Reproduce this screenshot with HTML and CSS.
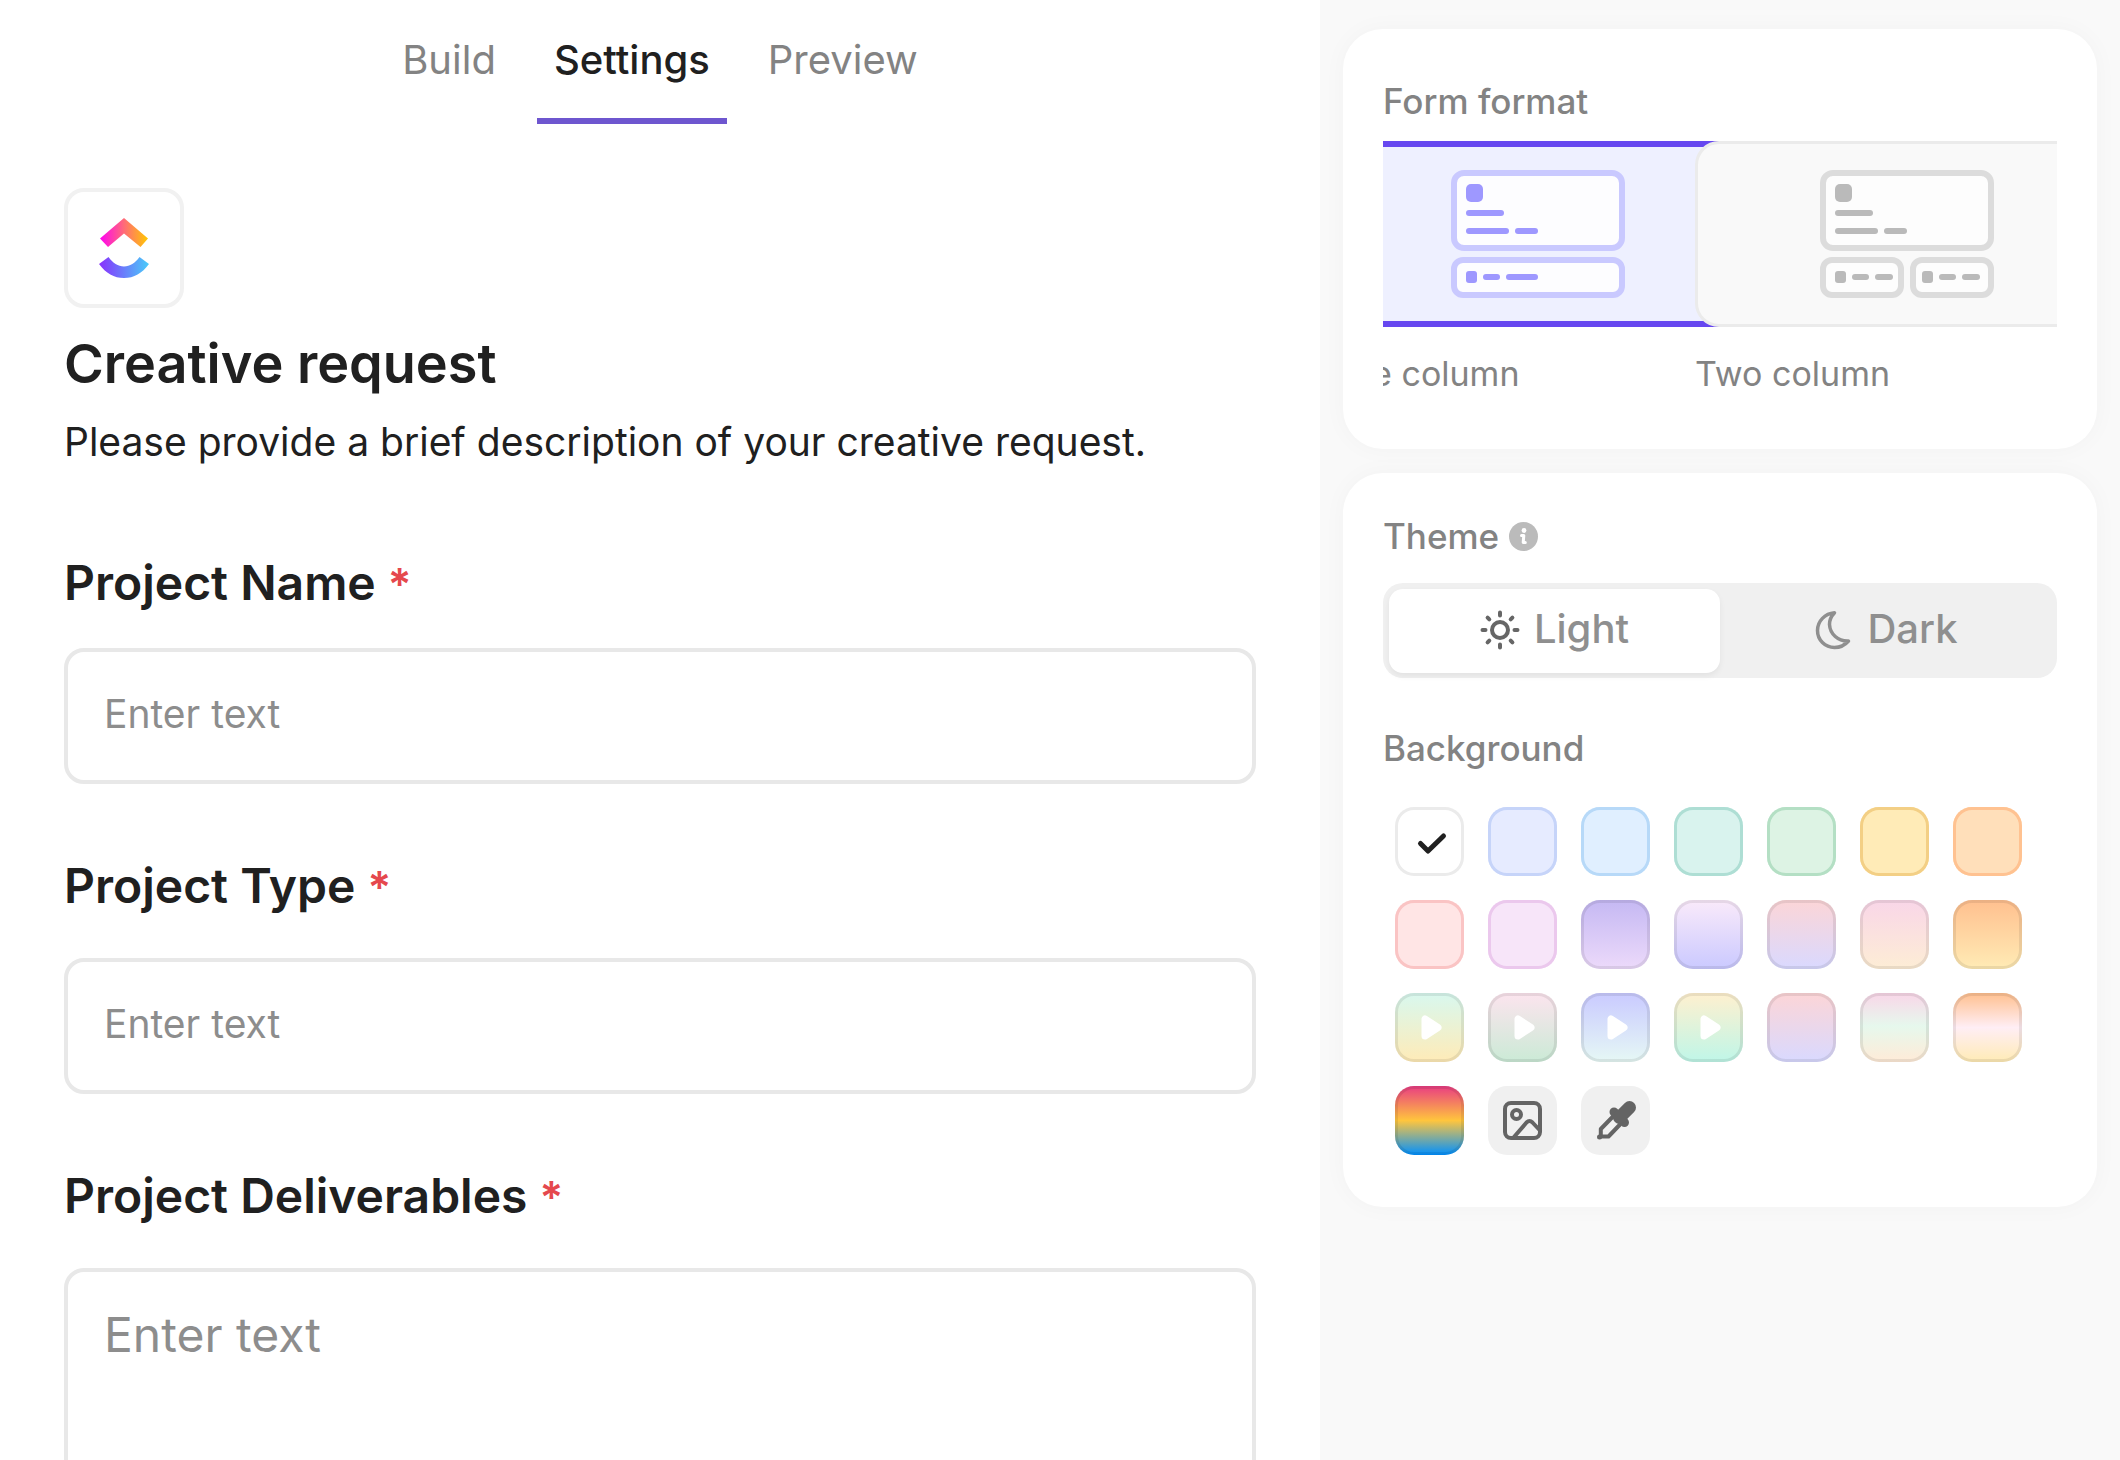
FILE: index.html
```
<!DOCTYPE html>
<html lang="en">
<head>
<meta charset="utf-8">
<meta name="viewport" content="width=device-width, initial-scale=1">
<title>Creative request – Form settings</title>
<link rel="stylesheet" href="styles.css">
</head>
<body>
<div class="app">
  <main class="editor">
    <nav class="tabs" aria-label="Form views">
      <button type="button" class="tab">Build</button>
      <button type="button" class="tab tab-active" aria-current="page">Settings</button>
      <button type="button" class="tab">Preview</button>
    </nav>

    <form class="form">
      <div class="logo">
        <svg width="112" height="112" viewBox="0 0 112 112" role="img" aria-label="ClickUp">
          <defs>
            <linearGradient id="chevron" x1="32" x2="80" y1="0" y2="0" gradientUnits="userSpaceOnUse">
              <stop offset="0" stop-color="#ff02f0"/>
              <stop offset=".5" stop-color="#ff6b78"/>
              <stop offset="1" stop-color="#ffc800"/>
            </linearGradient>
            <linearGradient id="smile" x1="31" x2="81" y1="0" y2="0" gradientUnits="userSpaceOnUse">
              <stop offset="0" stop-color="#8930fd"/>
              <stop offset="1" stop-color="#49ccf9"/>
            </linearGradient>
          </defs>
          <path fill="url(#chevron)" d="M56 26 80 46.500 72.500 55 56 41.500 40 55 32 46.500Z"/>
          <path fill="url(#smile)" d="M31 72 40.500 65C45 71 50 74.500 56 74.500S67 71 71.500 65L81 72C74 81.500 66 86 56 86S38 81.500 31 72Z"/>
        </svg>
      </div>
      <h1 class="title">Creative request</h1>
      <p class="description">Please provide a brief description of your creative request.</p>

      <div class="fields">
        <div class="field field-first">
          <label for="project-name">Project Name <span class="required">*</span></label>
          <input class="control" id="project-name" type="text" placeholder="Enter text" required>
        </div>
        <div class="field">
          <label for="project-type">Project Type <span class="required">*</span></label>
          <input class="control" id="project-type" type="text" placeholder="Enter text" required>
        </div>
        <div class="field">
          <label for="project-deliverables">Project Deliverables <span class="required">*</span></label>
          <textarea class="control control-long" id="project-deliverables" rows="5" placeholder="Enter text" required></textarea>
        </div>
      </div>
    </form>
  </main>

  <aside class="sidebar">
    <section class="card card-format">
      <h2 class="card-title">Form format</h2>
      <div class="format-viewport">
        <div class="format-strip">
          <label class="format">
            <input class="sr-only" type="radio" name="format" checked>
            <span class="format-tile">
              <svg class="thumb thumb-one" width="174" height="128" viewBox="0 0 174 128">
                <g class="thumb-frame">
                  <rect x="3" y="3" width="168" height="75" rx="10"/>
                  <rect x="3" y="90" width="168" height="35" rx="9"/>
                </g>
                <g class="thumb-ink">
                  <rect x="15" y="14" width="17" height="18" rx="5"/>
                  <rect x="15" y="40" width="38" height="6" rx="3"/>
                  <rect x="15" y="58" width="43" height="6" rx="3"/>
                  <rect x="64" y="58" width="23" height="6" rx="3"/>
                  <rect x="15" y="101" width="11" height="12" rx="3"/>
                  <rect x="32" y="104" width="17" height="6" rx="3"/>
                  <rect x="55" y="104" width="32" height="6" rx="3"/>
                </g>
              </svg>
            </span>
            <span class="format-name">One column</span>
          </label>
          <label class="format">
            <input class="sr-only" type="radio" name="format">
            <span class="format-tile">
              <svg class="thumb thumb-two" width="174" height="128" viewBox="0 0 174 128">
                <g class="thumb-frame">
                  <rect x="3" y="3" width="168" height="75" rx="10"/>
                  <rect x="3" y="90" width="78" height="35" rx="9"/>
                  <rect x="93" y="90" width="78" height="35" rx="9"/>
                </g>
                <g class="thumb-ink">
                  <rect x="15" y="14" width="17" height="18" rx="5"/>
                  <rect x="15" y="40" width="38" height="6" rx="3"/>
                  <rect x="15" y="58" width="43" height="6" rx="3"/>
                  <rect x="64" y="58" width="23" height="6" rx="3"/>
                  <rect x="15" y="101" width="11" height="12" rx="3"/>
                  <rect x="32" y="104" width="17" height="6" rx="3"/>
                  <rect x="55" y="104" width="18" height="6" rx="3"/>
                  <rect x="102" y="101" width="11" height="12" rx="3"/>
                  <rect x="119" y="104" width="17" height="6" rx="3"/>
                  <rect x="142" y="104" width="18" height="6" rx="3"/>
                </g>
              </svg>
            </span>
            <span class="format-name">Two column</span>
          </label>
        </div>
      </div>
    </section>

    <section class="card">
      <h2 class="card-title">Theme
        <svg width="29" height="29" viewBox="0 0 29 29" aria-hidden="true">
          <circle cx="14.500" cy="14.500" r="14.500" fill="#bbb"/>
          <circle cx="15" cy="8.500" r="2.400" fill="#fff"/>
          <path d="M12.500 13.500H14.800L14.200 20.500H16.300" fill="none" stroke="#fff" stroke-width="3" stroke-linecap="round" stroke-linejoin="round"/>
        </svg>
      </h2>
      <div class="theme-switch">
        <label class="theme theme-active">
          <input class="sr-only" type="radio" name="theme" checked>
          <svg width="40" height="40" viewBox="0 0 40 40" fill="none" stroke="#666" stroke-width="4" stroke-linecap="round" aria-hidden="true">
            <circle cx="20" cy="20" r="8"/>
            <path d="M20 2.500V5.500M20 34.500V37.500M2.500 20H5.500M34.500 20H37.500M7.600 7.600 9.300 9.300M30.700 30.700 32.400 32.400M7.600 32.400 9.300 30.700M30.700 9.300 32.400 7.600"/>
          </svg>
          Light
        </label>
        <label class="theme">
          <input class="sr-only" type="radio" name="theme">
          <svg width="40" height="40" viewBox="0 0 40 40" fill="none" stroke="#8f8f8f" stroke-width="3.500" stroke-linecap="round" stroke-linejoin="round" aria-hidden="true">
            <path d="M21.500 2.800C12 3.600 4.500 11 4.500 20.500C4.500 30 12 37.500 21.500 37.500C27.500 37.500 32 35 35.500 31C25 31.500 17 24 16.500 14.500C16.400 10 18.500 6 21.500 2.800Z"/>
          </svg>
          Dark
        </label>
      </div>

      <h2 class="card-title card-title-next">Background</h2>
      <div class="swatches">
        <label class="swatch bg-white"><input type="radio" name="background" aria-label="White" checked><svg viewBox="0 0 69 69" aria-hidden="true"><path class="check" d="M25.500 36.500 33 44 48.500 29"/></svg></label>
        <label class="swatch bg-indigo"><input type="radio" name="background" aria-label="Indigo"></label>
        <label class="swatch bg-sky"><input type="radio" name="background" aria-label="Sky"></label>
        <label class="swatch bg-teal"><input type="radio" name="background" aria-label="Teal"></label>
        <label class="swatch bg-green"><input type="radio" name="background" aria-label="Green"></label>
        <label class="swatch bg-yellow"><input type="radio" name="background" aria-label="Yellow"></label>
        <label class="swatch bg-orange"><input type="radio" name="background" aria-label="Orange"></label>

        <label class="swatch bg-red"><input type="radio" name="background" aria-label="Red"></label>
        <label class="swatch bg-pink"><input type="radio" name="background" aria-label="Pink"></label>
        <label class="swatch bg-violet"><input type="radio" name="background" aria-label="Violet gradient"></label>
        <label class="swatch bg-lilac"><input type="radio" name="background" aria-label="Lilac gradient"></label>
        <label class="swatch bg-dusk"><input type="radio" name="background" aria-label="Dusk gradient"></label>
        <label class="swatch bg-blush"><input type="radio" name="background" aria-label="Blush gradient"></label>
        <label class="swatch bg-amber"><input type="radio" name="background" aria-label="Amber gradient"></label>

        <label class="swatch bg-spring"><input type="radio" name="background" aria-label="Spring animation"><svg viewBox="0 0 69 69" aria-hidden="true"><path class="play" d="M30 26V43L43 34.500Z"/></svg></label>
        <label class="swatch bg-meadow"><input type="radio" name="background" aria-label="Meadow animation"><svg viewBox="0 0 69 69" aria-hidden="true"><path class="play" d="M30 26V43L43 34.500Z"/></svg></label>
        <label class="swatch bg-ice"><input type="radio" name="background" aria-label="Ice animation"><svg viewBox="0 0 69 69" aria-hidden="true"><path class="play" d="M30 26V43L43 34.500Z"/></svg></label>
        <label class="swatch bg-mint"><input type="radio" name="background" aria-label="Mint animation"><svg viewBox="0 0 69 69" aria-hidden="true"><path class="play" d="M30 26V43L43 34.500Z"/></svg></label>
        <label class="swatch bg-dusk"><input type="radio" name="background" aria-label="Evening gradient"></label>
        <label class="swatch bg-sorbet"><input type="radio" name="background" aria-label="Sorbet gradient"></label>
        <label class="swatch bg-peach"><input type="radio" name="background" aria-label="Peach gradient"></label>

        <label class="swatch bg-rainbow"><input type="radio" name="background" aria-label="Rainbow gradient"></label>
        <button type="button" class="swatch tool" aria-label="Upload image">
          <svg viewBox="0 0 69 69" fill="none" stroke="#646464" stroke-width="4" stroke-linecap="round" stroke-linejoin="round" aria-hidden="true">
            <rect x="17" y="17" width="35" height="35" rx="6"/>
            <circle cx="28.500" cy="28.500" r="4.500"/>
            <path d="M26 51 38.500 36.500Q41.500 33.500 44.500 36.500L52 44.500"/>
          </svg>
        </button>
        <button type="button" class="swatch tool" aria-label="Pick colour">
          <svg viewBox="0 0 69 69" fill="none" stroke="#646464" stroke-linecap="round" stroke-linejoin="round" aria-hidden="true">
            <path stroke-width="4" d="M32 30.500 19.800 43V50.500H27.500L39 38.500"/>
            <path stroke-width="5" d="M18.500 51H18.600"/>
            <path stroke-width="9" d="M33 26 43.500 36.500"/>
            <path stroke-width="13" d="M48.500 21.500 38.500 31.500"/>
          </svg>
        </button>
      </div>
    </section>
  </aside>
</div>
</body>
</html>
```
FILE: styles.css
```
*,
*::before,
*::after {
  box-sizing: border-box;
}

body {
  margin: 0;
  font-family: Inter, "Liberation Sans", sans-serif;
  font-size: 40px;
  line-height: 48px;
  font-optical-sizing: none;
  color: #202020;
  background: #fff;
}

button,
input,
textarea {
  margin: 0;
  font: inherit;
  color: inherit;
}

h1,
h2,
p {
  margin: 0;
}

.app {
  display: grid;
  grid-template-columns: minmax(0, 33fr) minmax(0, 20fr);
  height: 100vh;
}

.sr-only {
  position: absolute;
  width: 1px;
  height: 1px;
  margin: 0;
  opacity: 0;
}

/* Editor pane */

.editor {
  overflow: auto;
  scrollbar-width: none;
  padding: 36px 64px 0;
}

.tabs {
  display: flex;
  justify-content: center;
  gap: 24px;
}

.tab {
  padding: 0 17px 34px;
  border: 0;
  border-bottom: 6px solid transparent;
  background: none;
  color: #838383;
}

.tab-active {
  border-color: #6e56cf;
  color: #202020;
  font-weight: 500;
}

.form {
  padding-top: 64px;
}

.logo {
  width: 120px;
  height: 120px;
  border: 4px solid #f1f1f1;
  border-radius: 20px;
}

.logo svg {
  display: block;
}

.title {
  margin-top: 24px;
  font-size: 54px;
  font-weight: 600;
  line-height: 64px;
}

.description {
  margin-top: 22px;
  font-size: 39px;
}

.fields {
  display: flex;
  flex-direction: column;
  gap: 72px;
  margin-top: 87px;
}

.field {
  display: flex;
  flex-direction: column;
  gap: 41px;
}

.field-first {
  gap: 34px;
}

.field label {
  font-size: 48px;
  font-weight: 600;
  line-height: 60px;
}

.required {
  color: #e5484d;
  font-size: 44px;
}

.control {
  width: 100%;
  height: 136px;
  padding: 0 36px 6px;
  border: 4px solid #e8e8e8;
  border-radius: 20px;
  background: #fff;
  outline: 0;
  font-size: 39px;
}

.control::placeholder {
  color: #8d8d8d;
  opacity: 1;
}

.control-long {
  display: block;
  height: 320px;
  padding: 33px 36px;
  font-size: 48px;
  line-height: 60px;
  resize: none;
}

/* Settings sidebar */

.sidebar {
  display: flex;
  flex-direction: column;
  gap: 24px;
  padding: 29px 23px;
  background: #f9f9f9;
}

.card {
  padding: 43px 40px 52px;
  border-radius: 40px;
  background: #fff;
  box-shadow: 0 0 24px rgba(0, 0, 0, 0.03);
}

.card-format {
  padding: 52px 40px 55px;
}

.card-title {
  display: flex;
  align-items: center;
  gap: 10px;
  font-size: 35px;
  font-weight: 500;
  line-height: 40px;
  color: #838383;
}

.card-title-next {
  margin-top: 50px;
}

.format-viewport {
  overflow: hidden;
  margin-top: 20px;
}

.format-strip {
  display: flex;
  width: max-content;
  margin-left: -57px;
}

.format {
  display: flex;
  flex-direction: column;
  gap: 27px;
  width: 424px;
}

.format + .format {
  margin-left: -55px;
}

.format-tile {
  display: grid;
  place-items: center;
  height: 186px;
  border: 3px solid #ebebeb;
  border-radius: 24px;
  background: #f9f9f9;
}

.format input:checked + .format-tile {
  border: 6px solid #6647f0;
  background: #eef0ff;
}

.format-name {
  font-size: 34px;
  line-height: 40px;
  color: #838383;
}

.thumb-frame {
  fill: #fdfdff;
  stroke: #c9c9ff;
  stroke-width: 6px;
}

.thumb-ink {
  fill: #9e98ff;
}

.thumb-two .thumb-frame {
  fill: #fdfdfd;
  stroke: #dcdcdc;
}

.thumb-two .thumb-ink {
  fill: #bababa;
}

.theme-switch {
  display: grid;
  grid-template-columns: 1fr 1fr;
  margin-top: 27px;
  padding: 6px 6px 5px;
  border-radius: 20px;
  background: #f0f0f0;
}

.theme {
  display: flex;
  align-items: center;
  justify-content: center;
  gap: 14px;
  height: 84px;
  padding-bottom: 4px;
  border-radius: 14px;
  color: #8f8f8f;
  font-weight: 500;
}

.theme svg {
  margin-top: 2px;
}

.theme-active {
  background: #fff;
  box-shadow: 0 3px 6px rgba(0, 0, 0, 0.06);
}

.swatches {
  display: grid;
  grid-template-columns: repeat(7, 69px);
  gap: 24px;
  margin-top: 39px;
  padding-left: 12px;
}

.swatch {
  --edge: rgba(0, 0, 0, 0.08);
  display: grid;
  width: 69px;
  height: 69px;
  padding: 0;
  border: 0;
  border-radius: 19px;
  box-shadow: inset 0 0 0 3px var(--edge);
}

.swatch input,
.swatch svg {
  grid-area: 1 / 1;
  width: 69px;
  height: 69px;
}

.swatch input {
  appearance: none;
  border-radius: inherit;
}

.check {
  fill: none;
  stroke: #202020;
  stroke-width: 5px;
  stroke-linecap: round;
  stroke-linejoin: round;
}

.play {
  fill: #fff;
  stroke: #fff;
  stroke-width: 7px;
  stroke-linejoin: round;
}

.tool {
  background: #f0f0f0;
  box-shadow: none;
}

.bg-white { --edge: #ebebeb; background: #fff; }
.bg-indigo { --edge: #c6d4f9; background: #e6ebff; }
.bg-sky { --edge: #b7d9f8; background: #e0efff; }
.bg-teal { --edge: #aeded4; background: #d9f3ee; }
.bg-green { --edge: #b4dfc4; background: #ddf3e4; }
.bg-yellow { --edge: #f3cf85; background: #ffebb7; }
.bg-orange { --edge: #ffc291; background: #ffdfba; }
.bg-red { --edge: #fac4c4; background: #ffe5e5; }
.bg-pink { --edge: #ebc8ed; background: #f7e5f9; }
.bg-violet { background: linear-gradient(#c5b8f3, #ecdafa); }
.bg-lilac { background: linear-gradient(#faeafa, #cac9ff); }
.bg-dusk { background: linear-gradient(#fcd5d7, #d9d9ff); }
.bg-blush { background: linear-gradient(#f9d6e8, #fdedd5); }
.bg-amber { background: linear-gradient(#ffc08f, #ffebb5); }
.bg-spring { background: linear-gradient(#d8f8ef, #ffebb7); }
.bg-meadow { background: linear-gradient(#fce4ee, #cbead6); }
.bg-ice { background: linear-gradient(#c9caff, #e6f8f5); }
.bg-mint { background: linear-gradient(#fff0cf, #bff6e8); }
.bg-sorbet { background: linear-gradient(#f9d6e8, #e6f8ed 48%, #ffebd7); }
.bg-peach { background: linear-gradient(#ffc08f, #ffeef5 50%, #ffebb5); }
.bg-rainbow { background: linear-gradient(#e93d82, #ffc53d 50%, #0090ff); }
```
